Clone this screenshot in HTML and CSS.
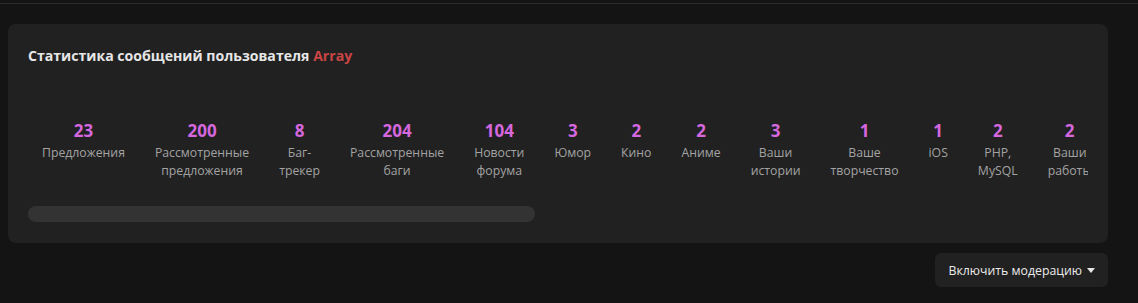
FILE: index.html
```html
<!DOCTYPE html>
<html lang="ru">
<head>
    <meta charset="UTF-8">
    <meta name="viewport" content="width=device-width, initial-scale=1.0">
    <title>Статистика сообщений</title>
    <link rel="stylesheet" href="styles.css">
</head>
<body>
    <div class="topbar"></div>

    <div class="stats-card">
        <h3 class="stats-title">Статистика сообщений пользователя <span class="user-name">Array</span></h3>

        <div class="stats-row">
            <div class="stat"><div class="stat-count">23</div><div class="stat-label">Предложения</div></div>
            <div class="stat"><div class="stat-count">200</div><div class="stat-label">Рассмотренные предложения</div></div>
            <div class="stat"><div class="stat-count">8</div><div class="stat-label">Баг-трекер</div></div>
            <div class="stat"><div class="stat-count">204</div><div class="stat-label">Рассмотренные баги</div></div>
            <div class="stat"><div class="stat-count">104</div><div class="stat-label">Новости форума</div></div>
            <div class="stat"><div class="stat-count">3</div><div class="stat-label">Юмор</div></div>
            <div class="stat"><div class="stat-count">2</div><div class="stat-label">Кино</div></div>
            <div class="stat"><div class="stat-count">2</div><div class="stat-label">Аниме</div></div>
            <div class="stat"><div class="stat-count">3</div><div class="stat-label">Ваши истории</div></div>
            <div class="stat"><div class="stat-count">1</div><div class="stat-label">Ваше творчество</div></div>
            <div class="stat"><div class="stat-count">1</div><div class="stat-label">iOS</div></div>
            <div class="stat"><div class="stat-count">2</div><div class="stat-label">PHP, MySQL</div></div>
            <div class="stat"><div class="stat-count">2</div><div class="stat-label">Ваши работы</div></div>
        </div>

        <!-- scroll position of the row above -->
        <div class="scroll-track"><div class="scroll-thumb"></div></div>
    </div>

    <div class="actions">
        <button class="moderation-button">Включить модерацию <span class="caret"></span></button>
    </div>
</body>
</html>
```

FILE: styles.css
```css
body {
    font-family: "Open Sans", "Noto Sans", sans-serif;
    margin: 0;
    padding: 0;
    background-color: #141414;
    color: #e6e6e6;
}

.topbar {
    height: 3px;
    border-bottom: 1px solid #2c2c2c;
    margin-bottom: 20px;
}

.stats-card {
    margin: 0 30px 0 8px;
    padding: 20px 20px 21px;
    background-color: #212121;
    border-radius: 8px;
}

.stats-title {
    margin: 0;
    font-size: 14.1px;
    font-weight: bold;
    line-height: 24px;
    color: #e6e6e6;
}

.user-name {
    color: #c94545;
}

.stats-row {
    display: flex;
    overflow: hidden;
    gap: 30px;
    margin-top: 52px;
    padding-left: 14px;
}

.stat {
    flex: none;
    width: min-content;
    text-align: center;
}

.stat-count {
    margin-bottom: 2px;
    font-size: 17px;
    font-weight: bold;
    line-height: 22px;
    color: #d567df;
}

.stat-label {
    font-size: 12.25px;
    line-height: 18px;
    color: #a3a3a3;
}

.scroll-track {
    margin-top: 26px;
    height: 16px;
}

.scroll-thumb {
    width: 507px;
    height: 16px;
    border-radius: 8px;
    background-color: #333333;
}

.actions {
    display: flex;
    justify-content: flex-end;
    margin: 10px 30px 0 0;
}

.moderation-button {
    display: flex;
    align-items: center;
    gap: 5px;
    height: 34px;
    padding: 0 13px;
    font-family: inherit;
    font-size: 12.3px;
    color: #ececec;
    background-color: #212121;
    border: none;
    border-radius: 6px;
    cursor: pointer;
}

.caret {
    width: 0;
    height: 0;
    border-left: 4px solid transparent;
    border-right: 4px solid transparent;
    border-top: 5px solid #e6e6e6;
}
```
